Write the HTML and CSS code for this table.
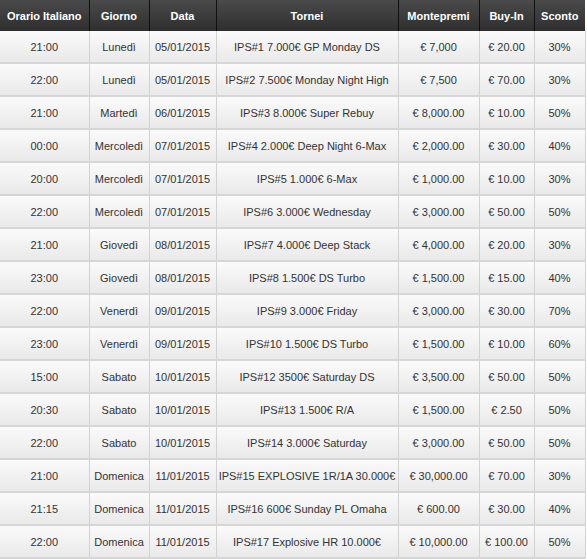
FILE: index.html
```html
<!DOCTYPE html>
<html>
<head>
<meta charset="utf-8">
<link rel="stylesheet" href="styles.css">
</head>
<body>
<table class="sched">
<colgroup>
<col class="c1"><col class="c2"><col class="c3"><col class="c4"><col class="c5"><col class="c6"><col class="c7">
</colgroup>
<thead>
<tr><th>Orario Italiano</th><th>Giorno</th><th>Data</th><th>Tornei</th><th>Montepremi</th><th>Buy-In</th><th>Sconto</th></tr>
</thead>
<tbody>
<tr><td>21:00</td><td>Lunedì</td><td>05/01/2015</td><td>IPS#1 7.000€ GP Monday DS</td><td>€ 7,000</td><td>€ 20.00</td><td>30%</td></tr>
<tr><td>22:00</td><td>Lunedì</td><td>05/01/2015</td><td>IPS#2 7.500€ Monday Night High</td><td>€ 7,500</td><td>€ 70.00</td><td>30%</td></tr>
<tr><td>21:00</td><td>Martedì</td><td>06/01/2015</td><td>IPS#3 8.000€ Super Rebuy</td><td>€ 8,000.00</td><td>€ 10.00</td><td>50%</td></tr>
<tr><td>00:00</td><td>Mercoledì</td><td>07/01/2015</td><td>IPS#4 2.000€ Deep Night 6-Max</td><td>€ 2,000.00</td><td>€ 30.00</td><td>40%</td></tr>
<tr><td>20:00</td><td>Mercoledì</td><td>07/01/2015</td><td>IPS#5 1.000€ 6-Max</td><td>€ 1,000.00</td><td>€ 10.00</td><td>30%</td></tr>
<tr><td>22:00</td><td>Mercoledì</td><td>07/01/2015</td><td>IPS#6 3.000€ Wednesday</td><td>€ 3,000.00</td><td>€ 50.00</td><td>50%</td></tr>
<tr><td>21:00</td><td>Giovedì</td><td>08/01/2015</td><td>IPS#7 4.000€ Deep Stack</td><td>€ 4,000.00</td><td>€ 20.00</td><td>30%</td></tr>
<tr><td>23:00</td><td>Giovedì</td><td>08/01/2015</td><td>IPS#8 1.500€ DS Turbo</td><td>€ 1,500.00</td><td>€ 15.00</td><td>40%</td></tr>
<tr><td>22:00</td><td>Venerdì</td><td>09/01/2015</td><td>IPS#9 3.000€ Friday</td><td>€ 3,000.00</td><td>€ 30.00</td><td>70%</td></tr>
<tr><td>23:00</td><td>Venerdì</td><td>09/01/2015</td><td>IPS#10 1.500€ DS Turbo</td><td>€ 1,500.00</td><td>€ 10.00</td><td>60%</td></tr>
<tr><td>15:00</td><td>Sabato</td><td>10/01/2015</td><td>IPS#12 3500€ Saturday DS</td><td>€ 3,500.00</td><td>€ 50.00</td><td>50%</td></tr>
<tr><td>20:30</td><td>Sabato</td><td>10/01/2015</td><td>IPS#13 1.500€ R/A</td><td>€ 1,500.00</td><td>€ 2.50</td><td>50%</td></tr>
<tr><td>22:00</td><td>Sabato</td><td>10/01/2015</td><td>IPS#14 3.000€ Saturday</td><td>€ 3,000.00</td><td>€ 50.00</td><td>50%</td></tr>
<tr><td>21:00</td><td>Domenica</td><td>11/01/2015</td><td>IPS#15 EXPLOSIVE 1R/1A 30.000€</td><td>€ 30,000.00</td><td>€ 70.00</td><td>30%</td></tr>
<tr><td>21:15</td><td>Domenica</td><td>11/01/2015</td><td>IPS#16 600€ Sunday PL Omaha</td><td>€ 600.00</td><td>€ 30.00</td><td>40%</td></tr>
<tr><td>22:00</td><td>Domenica</td><td>11/01/2015</td><td>IPS#17 Explosive HR 10.000€</td><td>€ 10,000.00</td><td>€ 100.00</td><td>50%</td></tr>
</tbody>
</table>
</body>
</html>
```
FILE: styles.css
```css
html, body {
  margin: 0;
  padding: 0;
  background: #ffffff;
}
.sched {
  width: 585px;
  border-collapse: collapse;
  table-layout: fixed;
  font-family: "Liberation Sans", Arial, sans-serif;
  font-size: 11px;
  color: #333333;
}
.c1 { width: 89px; }
.c2 { width: 60px; }
.c3 { width: 67px; }
.c4 { width: 182px; }
.c5 { width: 81px; }
.c6 { width: 55px; }
.c7 { width: 51px; }
.sched th {
  height: 31px;
  padding: 0;
  color: #ffffff;
  font-weight: bold;
  font-size: 11px;
  text-align: center;
  background: linear-gradient(#4a4a4a, #2e2e2e);
  border-left: 1px solid #111111;
  white-space: nowrap;
}
.sched th:first-child { border-left: none; }
.sched td {
  height: 31px;
  padding: 0;
  text-align: center;
  white-space: nowrap;
  background: linear-gradient(#fafafa, #e9e9e9);
  border-left: 1px solid #d2d2d2;
  border-right: 1px solid #d2d2d2;
  border-bottom: 2px solid #d6d6d6;
}
.sched td:first-child { border-left: none; }
```
